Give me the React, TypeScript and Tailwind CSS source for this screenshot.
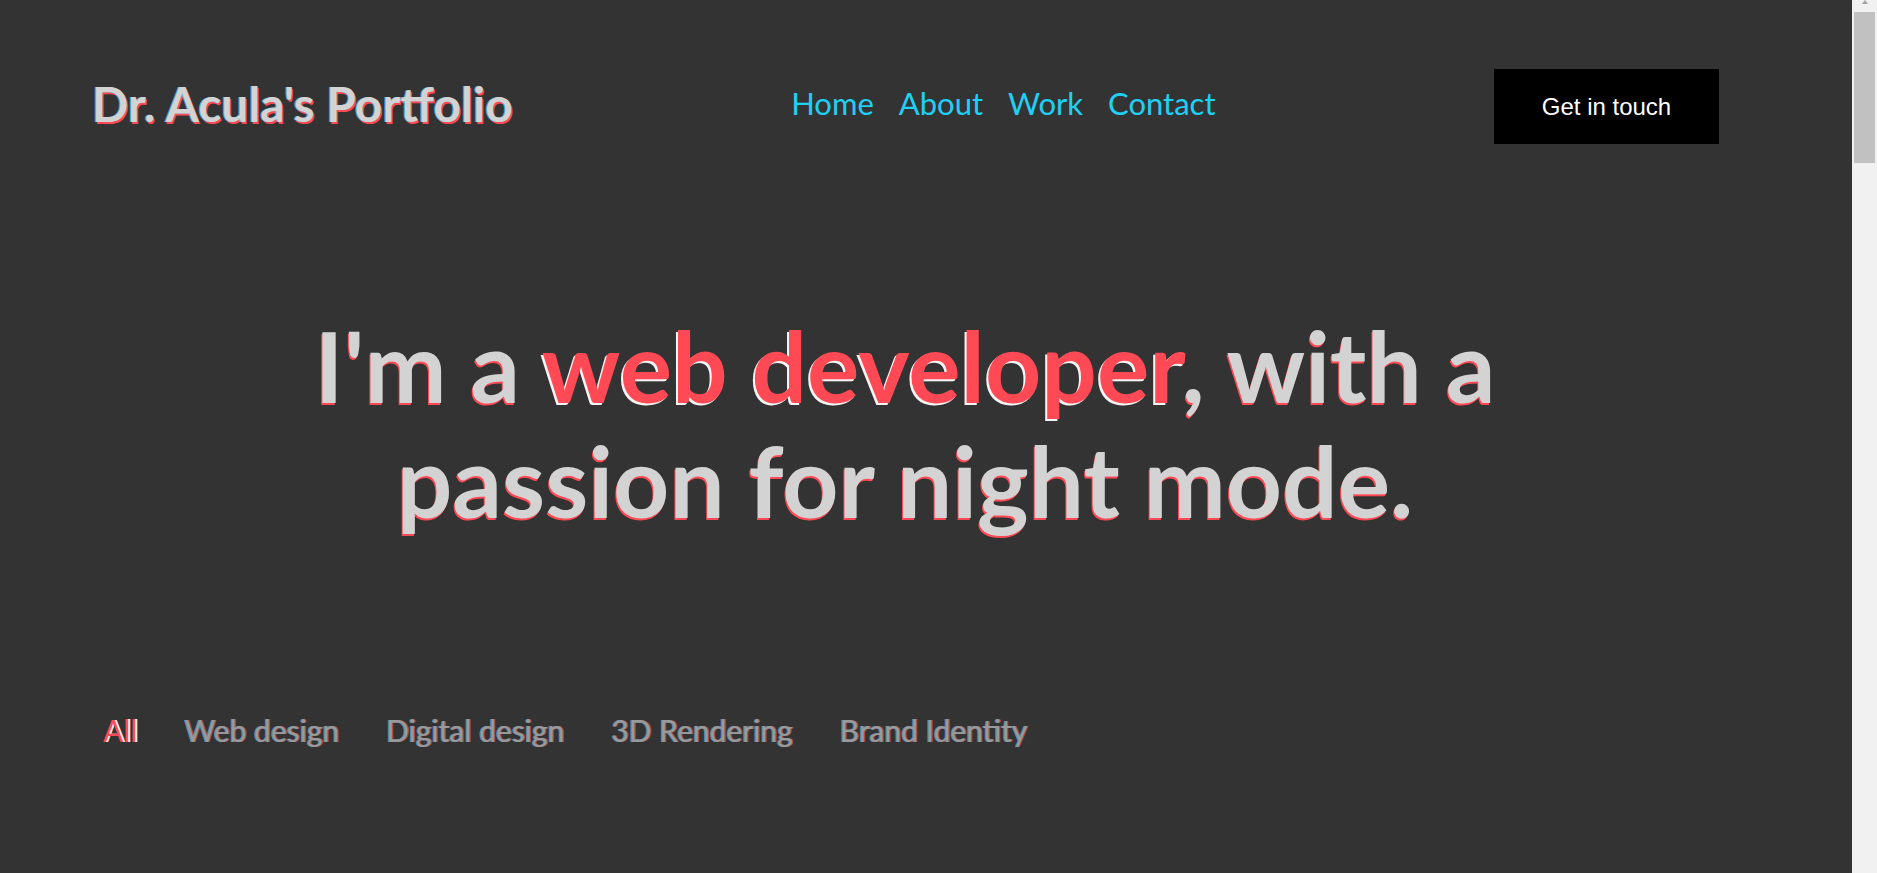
export default function App() {
  const filters = ['Web design', 'Digital design', '3D Rendering', 'Brand Identity']

  return (
    <div className="flex h-[873px] overflow-hidden bg-[#333333] font-['Lato','Noto_Sans',sans-serif]">
      <main className="flex-1">
        <header className="flex items-center justify-between pl-[92px] pr-[133px] pt-[69px]">
          <a
            href="#"
            className="mb-[6px] text-[48px] font-bold leading-none text-[#d3d3d3] [text-shadow:-1px_0_#4a9fc4,1px_2px_#ff4a55]"
          >
            Dr. Acula's Portfolio
          </a>
          <nav className="mb-[6px] flex items-center gap-[25px] text-[31px] text-[#1fd0f5]">
            <a href="#">Home</a>
            <a href="#">About</a>
            <a href="#">Work</a>
            <a href="#">Contact</a>
          </nav>
          <button className="h-[75px] w-[225px] bg-black font-['Liberation_Sans',Arial,sans-serif] text-[24px] text-white">
            Get in touch
          </button>
        </header>

        <section className="pr-[42px] pt-[164px] text-center">
          <h1 className="mx-auto max-w-[1250px] text-[98px] font-bold leading-[115px] text-[#d3d3d3] [text-shadow:-1px_2px_#ff4a55]">
            I'm a{' '}
            <span className="text-[#ff4a55] [text-shadow:-2px_2px_#f5f5f5]">web developer</span>, with a
            passion for night mode.
          </h1>
        </section>

        <ul className="flex items-center gap-[47px] pl-[103px] pt-[170px] text-[30px] text-[#9a9a9a]">
          <li className="text-[#ff4a55] [text-shadow:2px_0_#f0f0f0]">All</li>
          {filters.map((f) => (
            <li key={f} className="[text-shadow:-1px_0_#5b8fb0,1px_0_#b0504f]">
              {f}
            </li>
          ))}
        </ul>
      </main>

      <aside className="flex w-[25px] flex-col items-center bg-[#f1f1f1]">
        <svg width="12" height="4" viewBox="0 0 12 4" className="fill-[#a3a3a3]">
          <path d="M3 4 L6 0 L9 4 Z" />
        </svg>
        <div className="mt-[8px] h-[151px] w-[21px] bg-[#c1c1c1]" />
      </aside>
    </div>
  )
}
